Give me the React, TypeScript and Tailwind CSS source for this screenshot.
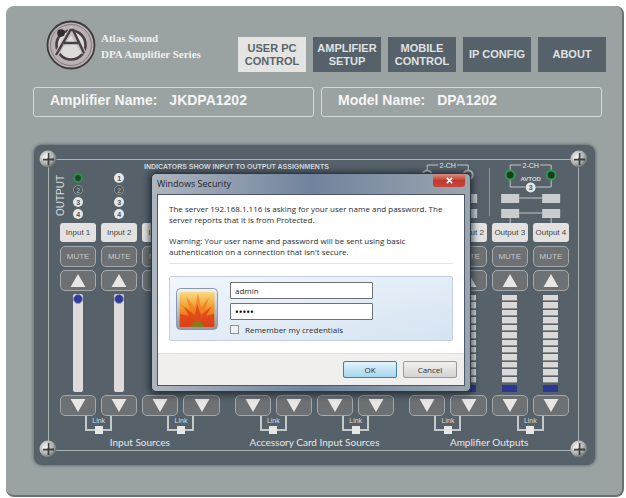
import clsx from "clsx";

const NAV = [
  { label: "USER PC CONTROL", active: true },
  { label: "AMPLIFIER SETUP", active: false },
  { label: "MOBILE CONTROL", active: false },
  { label: "IP CONFIG", active: false },
  { label: "ABOUT", active: false },
];

const GROUPS = [
  {
    title: "Input Sources",
    output: false,
    channels: ["Input 1", "Input 2", "Input 3", "Input 4"],
  },
  {
    title: "Accessory Card Input Sources",
    output: false,
    channels: ["Input 5", "Input 6", "Input 7", "Input 8"],
  },
  {
    title: "Amplifier Outputs",
    output: true,
    channels: ["Output 1", "Output 2", "Output 3", "Output 4"],
  },
];

const SEGMENTS = Array.from({ length: 12 }, (_, i) => i);

function Logo() {
  return (
    <svg viewBox="0 0 50 50" className="size-[50px] shrink-0" aria-label="Atlas Sound">
      <circle cx="25" cy="25" r="23.5" fill="#b9b1b3" stroke="#3d3a3c" strokeWidth="1.8" />
      <circle cx="25" cy="25" r="20.500" fill="none" stroke="#827a7d" strokeWidth="1" />
      <circle cx="25" cy="25" r="14.500" fill="#dedbdb" stroke="#4a3f43" strokeWidth="2.6" />
      <path d="M10 35 L25 10 L38 33" fill="none" stroke="#c4bdbf" strokeWidth="5" />
      <path d="M10 35 L24.500 10 H27 L38 33 M18 23 H32" fill="none" stroke="#4a3f43" strokeWidth="2.4" />
      <circle cx="15" cy="13" r="3.800" fill="#2f2a2c" />
    </svg>
  );
}

function Screw({ className }: { className: string }) {
  return (
    <svg viewBox="0 0 18 18" className={clsx("absolute size-[18px]", className)} aria-hidden>
      <defs>
        <radialGradient id="screw" cx="0.35" cy="0.35" r="0.75">
          <stop offset="0" stopColor="#f0f1ef" />
          <stop offset="0.6" stopColor="#a9adab" />
          <stop offset="1" stopColor="#4c5255" />
        </radialGradient>
      </defs>
      <circle cx="9" cy="9" r="8.500" fill="url(#screw)" />
      <path d="M9.500 3 V15 M4 9.500 H15" stroke="#3b4043" strokeWidth="1.8" />
      <path d="M8 3 V8 H3" fill="none" stroke="#f7f7f6" strokeWidth="1" />
    </svg>
  );
}

function Dot({ label, tone }: { label: string; tone: "on" | "off" | "plain" }) {
  return (
    <span
      className={clsx(
        "flex size-[10px] items-center justify-center rounded-full text-[7px] leading-none font-bold",
        tone === "on" && "border-2 border-[#2f8f4a] bg-[#1d4a2c] text-[#1d4a2c]",
        tone === "off" && "border border-[#8b9292] bg-[#4c5557] text-[#9aa3a2]",
        tone === "plain" && "bg-[#e6e8e8] text-[#4c5557]"
      )}
    >
      {label}
    </span>
  );
}

function OutputBridge({ active }: { active: boolean }) {
  const ring = active ? "#2f9a4a" : "#b9bfc0";
  const core = active ? "#1d3a28" : "#4c5557";
  return (
    <div className="relative">
      {active && <div className="absolute top-[6px] -left-[3px] h-12 w-px bg-[#8d9699]" />}
      <svg viewBox="0 0 77 61" className="h-[61px] w-full" aria-hidden>
        <path
          d="M18 8 V3 H29 M48 3 H59 V8 M18 18 V25 H33 M44 25 H59 V18 M27 36 H50 M27 51 H50 M18 56 V61 M59 56 V61"
          fill="none"
          stroke="#c3c9ca"
        />
        <text x="38.500" y="6" textAnchor="middle" fontSize="7" fill="#e6e8e8">
          2-CH
        </text>
        <circle cx="18" cy="13" r="4.500" fill={core} stroke={ring} strokeWidth="2" />
        <circle cx="59" cy="13" r="4.500" fill={core} stroke={ring} strokeWidth="2" />
        <text x="38.500" y="19" textAnchor="middle" fontSize="6" fontWeight="700" fill="#d5dadb">
          AVTOD
        </text>
        <circle cx="38.500" cy="25.500" r="5" fill="#e6e8e8" />
        <text x="38.500" y="28" textAnchor="middle" fontSize="7" fontWeight="700" fill="#4c5557">
          3
        </text>
        <path d="M9 32 H27 V41 H9 Z M50 32 H68 V41 H50 Z M9 47 H27 V56 H9 Z M50 47 H68 V56 H50 Z" fill="#c9cdcd" />
      </svg>
    </div>
  );
}

function ArrowButton({ label, down }: { label: string; down?: boolean }) {
  return (
    <button
      aria-label={label}
      className="flex h-[21px] w-full items-center justify-center rounded-[5px] border border-[#a3a9ab] bg-[#6d7173]"
    >
      <svg viewBox="0 0 16 14" className={clsx("h-[13px] w-4", down && "rotate-180")} aria-hidden>
        <path d="M8 0 L16 14 H0 Z" fill="#e9e7e5" />
      </svg>
    </button>
  );
}

function Channel({ name, output }: { name: string; output: boolean }) {
  return (
    <div className="flex flex-col items-center">
      <div className="flex h-[19px] w-full items-center justify-center rounded-[3px] bg-[#e4e2e0] text-[8px] whitespace-nowrap text-[#3f4446]">
        {name}
      </div>
      <button className="mt-1 h-[21px] w-full rounded-[5px] border border-[#a3a9ab] bg-[#6d7173] text-[8px] leading-none text-[#c6c9c9]">
        MUTE
      </button>
      <div className="mt-[3px] w-full">
        <ArrowButton label={`${name} up`} />
      </div>
      {output ? (
        <div className="mt-1 mb-[3px] flex h-[97px] w-[15px] flex-col gap-px">
          {SEGMENTS.map((i) => (
            <span key={i} className="flex-1 border-b border-[#8a9090] bg-[#dad9d7]" />
          ))}
          <span className="mt-px h-[7px] bg-[#2d3596]" />
        </div>
      ) : (
        <input
          type="range"
          aria-label={`${name} level`}
          defaultValue={100}
          className="mt-[3px] mb-[3px] h-[98px] w-[10px] appearance-none rounded-[2px] bg-[#dedbda] [direction:rtl] [writing-mode:vertical-lr] [&::-webkit-slider-thumb]:size-[10px] [&::-webkit-slider-thumb]:appearance-none [&::-webkit-slider-thumb]:rounded-full [&::-webkit-slider-thumb]:border [&::-webkit-slider-thumb]:border-[#8f94b8] [&::-webkit-slider-thumb]:bg-[#2d3b9a]"
        />
      )}
      <ArrowButton label={`${name} down`} down />
    </div>
  );
}

function LinkBracket() {
  return (
    <div className="flex flex-col items-center">
      <div className="h-[15px] w-[27px] border-x-2 border-b-2 border-[#c3c9ca] text-center text-[7px] leading-[9px] text-[#d5dadb]">
        Link
      </div>
      <button aria-label="Link channels" className="-mt-[5px] size-2 bg-[#e6e8e8]" />
    </div>
  );
}

function Mixer() {
  return (
    <div className="p-[14px] pr-4">
      <div className="relative border border-[#aab1b3] pt-0.5 pr-[9px] pb-0.5 pl-[11px]">
        <Screw className="-top-[10px] -left-[10px]" />
        <Screw className="-top-[10px] -right-[10px]" />
        <Screw className="-bottom-[8px] -left-[10px]" />
        <Screw className="-right-[10px] -bottom-[8px]" />

        <div className="grid grid-cols-3 gap-x-[15px]">
          <div className="col-span-2">
            <div className="pl-[84px] text-[7px] leading-[9px] font-bold whitespace-nowrap text-[#d5dadb]">
              INDICATORS SHOW INPUT TO OUTPUT ASSIGNMENTS
            </div>
            <div className="relative grid grid-cols-2 gap-x-[15px] pt-0.5">
              <span className="absolute top-1 -left-1 rotate-180 text-[10px] leading-[10px] text-[#d5dadb] [writing-mode:vertical-rl]">
                OUTPUT
              </span>
              {[0, 1].map((g) => (
                <div key={g} className="grid grid-cols-4 gap-x-[5px]">
                  {[0, 1, 2, 3].map((c) => (
                    <div key={c} className="flex flex-col items-center gap-0.5">
                      <Dot label="1" tone={c === 0 ? "on" : "plain"} />
                      <Dot label="2" tone="off" />
                      <Dot label="3" tone="plain" />
                      <Dot label="4" tone="plain" />
                    </div>
                  ))}
                </div>
              ))}
            </div>
          </div>
          <div className="grid grid-cols-2 gap-x-[5px]">
            <OutputBridge active={false} />
            <OutputBridge active />
          </div>
        </div>

        <div className="grid grid-cols-3 gap-x-[15px]">
          {GROUPS.map((group) => (
            <section key={group.title}>
              <div className="grid grid-cols-4 gap-x-[5px]">
                {group.channels.map((name) => (
                  <Channel key={name} name={name} output={group.output} />
                ))}
              </div>
              <div className="grid grid-cols-2 gap-x-[5px]">
                <LinkBracket />
                <LinkBracket />
              </div>
              <h2 className="mt-0.5 text-center font-['Lato',sans-serif] text-[10px] leading-3 whitespace-nowrap text-[#e6e8e8]">
                {group.title}
              </h2>
            </section>
          ))}
        </div>
      </div>
    </div>
  );
}

function UserTile() {
  return (
    <svg viewBox="0 0 42 42" className="size-[42px] shrink-0" aria-hidden>
      <defs>
        <linearGradient id="flower" x1="0" y1="0" x2="0" y2="1">
          <stop offset="0" stopColor="#f7dc84" />
          <stop offset="0.45" stopColor="#f59a2c" />
          <stop offset="1" stopColor="#d9411a" />
        </linearGradient>
        <linearGradient id="tile" x1="0" y1="0" x2="0" y2="1">
          <stop offset="0" stopColor="#eef4f8" />
          <stop offset="1" stopColor="#8b9aa5" />
        </linearGradient>
      </defs>
      <rect x="0.500" y="0.500" width="41" height="41" rx="4" fill="url(#tile)" stroke="#8c99a5" />
      <rect x="3.500" y="4" width="35" height="35" rx="1" fill="url(#flower)" />
      <path
        d="M21 33 L4 16 L14 22 L10 8 L19 20 L22 5 L25 20 L33 9 L29 22 L38 17 L24 33 Z"
        fill="#f07a22"
        opacity="0.7"
      />
      <path d="M21 37 L4 39 V26 L13 28 L8 19 L19 27 L21 16 L25 27 L35 19 L30 28 L38 26 V39 Z" fill="#dd3d16" opacity="0.75" />
      <path d="M15 39 C16 31 27 31 28 39 Z" fill="#8a7a1c" />
    </svg>
  );
}

function SecurityDialog() {
  return (
    <form
      role="dialog"
      aria-labelledby="dialog-title"
      className="absolute top-7 left-[117px] w-[320px] rounded-[5px] border border-[#2d3846] bg-linear-to-r from-[#aeb6bf] via-[#71839d] to-[#9aa5ae] px-[5px] pb-[5px] font-['Open_Sans',sans-serif] text-[8px] leading-[11px] text-[#2c2c2c] shadow-[0_1px_6px_2px_rgba(20,28,38,0.7)]"
    >
      <div className="flex h-5 items-start justify-between">
        <h1 id="dialog-title" className="pt-1 text-[9px] leading-3 text-[#1d242c]">
          Windows Security
        </h1>
        <button
          type="button"
          aria-label="Close"
          className="flex h-[13px] w-8 items-center justify-center rounded-b-[3px] bg-linear-to-b from-[#d98e84] via-[#bf3a2e] to-[#c9443a] text-white"
        >
          <svg viewBox="0 0 8 8" className="size-[7px]" aria-hidden>
            <path d="M1 1 L7 7 M7 1 L1 7" stroke="currentColor" strokeWidth="1.8" />
          </svg>
        </button>
      </div>

      <div className="border border-[#4c5868] bg-white">
        <div className="px-[11px] pt-2 pb-3">
          <p>
            The server 192.168.1.116 is asking for your user name and password. The
            server reports that it is from Protected.
          </p>
          <p className="mt-[10px]">
            Warning: Your user name and password will be sent using basic
            authentication on a connection that isn't secure.
          </p>
          <hr className="mt-1.5 border-[#e6e6e6]" />
          <div className="mt-3 flex items-center gap-3 rounded-[2px] border border-[#c3cfdf] bg-linear-to-br from-[#f1f6fb] to-[#d5e4f2] px-1.5 py-[5px]">
            <UserTile />
            <div className="w-[143px]">
              <input
                type="text"
                aria-label="User name"
                defaultValue="admin"
                className="block h-[17px] w-full rounded-[1px] border border-[#6e7277] bg-white px-1"
              />
              <input
                type="password"
                aria-label="Password"
                defaultValue="admin"
                className="mt-1 block h-[17px] w-full rounded-[1px] border border-[#6e7277] bg-white px-1 text-[10px] text-black"
              />
              <label className="mt-1 flex items-center gap-1.5 whitespace-nowrap">
                <input type="checkbox" className="size-[9px] appearance-none border border-[#8d9196] bg-[#eef2f6]" />
                Remember my credentials
              </label>
            </div>
          </div>
        </div>
        <div className="flex justify-end gap-1.5 border-t border-[#dfdfdf] bg-[#f1efee] px-[7px] py-[7px]">
          <button
            type="submit"
            className="h-[17px] w-[54px] rounded-[2px] border border-[#3f7fa8] bg-linear-to-b from-[#e3f3fb] to-[#a5d6ee]"
          >
            OK
          </button>
          <button
            type="button"
            className="h-[17px] w-[54px] rounded-[2px] border border-[#9a9a9a] bg-linear-to-b from-[#f0f0f0] to-[#d3d3d3]"
          >
            Cancel
          </button>
        </div>
      </div>
    </form>
  );
}

export default function App() {
  return (
    <div className="bg-white pt-1.5 pr-0.5 pl-1.5 font-['Liberation_Sans',sans-serif]">
      <main className="rounded-lg border-r-2 border-b-2 border-[#697173] bg-[#9aa3a2] pb-[30px]">
        <header className="flex items-start justify-between pt-[14px] pr-4 pl-10">
          <div className="flex items-center gap-[5px]">
            <Logo />
            <div className="pt-0.5 font-['Liberation_Serif',serif] text-[11px] leading-4 font-bold whitespace-nowrap text-[#eef0ef]">
              <div>Atlas Sound</div>
              <div>DPA Amplifier Series</div>
            </div>
          </div>
          <nav className="mt-[17px] flex gap-[7px]">
            {NAV.map((item) => (
              <a
                key={item.label}
                href="#"
                className={clsx(
                  "flex h-[35px] w-[68px] items-center justify-center text-center text-[11px] leading-[13px] font-bold",
                  item.active ? "bg-[#e4e5e2] text-[#5b6469]" : "bg-[#56616a] text-[#dfe2e2]"
                )}
              >
                {item.label}
              </a>
            ))}
          </nav>
        </header>

        <div className="mt-[15px] grid grid-cols-2 gap-[7px] pr-5 pl-[27px] text-[14px] font-bold text-[#f4f5f5]">
          <div className="flex h-[30px] items-center gap-3 rounded-[3px] border border-[#d3d8d7] pb-1 pl-4">
            <span>Amplifier Name:</span>
            <span>JKDPA1202</span>
          </div>
          <div className="flex h-[30px] items-center gap-3 rounded-[3px] border border-[#d3d8d7] pb-1 pl-4">
            <span>Model Name:</span>
            <span>DPA1202</span>
          </div>
        </div>

        <div className="relative mt-7 mr-[27px] ml-7 rounded-lg bg-[#56616a] shadow-[0_0_3px_1px_rgba(70,80,86,0.6)]">
          <Mixer />
          <SecurityDialog />
        </div>
      </main>
    </div>
  );
}
